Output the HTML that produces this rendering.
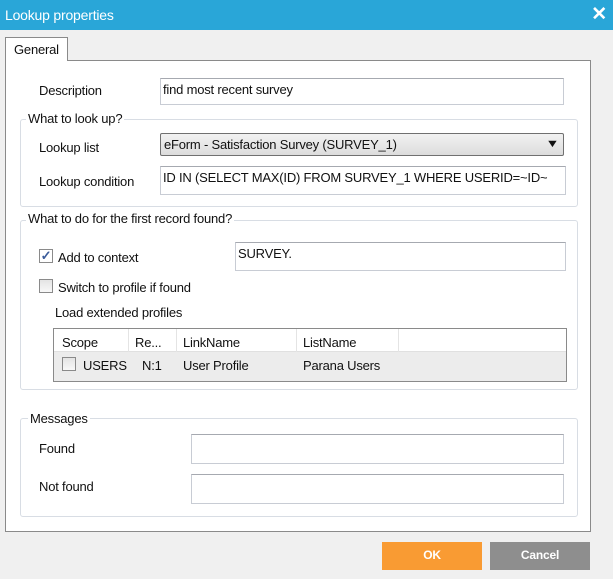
<!DOCTYPE html>
<html><head><style>
*{margin:0;padding:0;box-sizing:border-box}
body{width:613px;height:579px;background:#f0f0f0;font-family:"Liberation Sans",sans-serif;font-size:13px;color:#111;position:relative;overflow:hidden;letter-spacing:-0.2px}
.a{position:absolute}
.title{left:0;top:0;width:613px;height:30px;background:#29a6d8;color:#fff;font-size:14px;line-height:31px;padding-left:5px}
.x{right:6px;top:3px;color:#fff;font-size:19px;font-weight:bold}
.panel{left:5px;top:60px;width:586px;height:472px;background:#fff;border:1px solid #8a8a8a}
.tab{left:5px;top:37px;width:63px;height:24px;background:#fff;border:1px solid #8a8a8a;border-bottom:none;padding:4px 0 0 8px;z-index:2}
.inp{background:#fff;border:1px solid #c8ccd4;border-top-color:#a6a9b0;padding:3px 2px}
.grp{border:1px solid #d8dde4;border-radius:3px}
.gl{background:#fff;padding:0 2px}
.cb{width:14px;height:14px;border:1px solid #8a8a8a;background:linear-gradient(#e4e4e4,#f8f8f8)}
.btn{width:100px;height:28px;color:#fff;font-weight:bold;text-align:center;line-height:27px;font-size:12px}
</style></head><body>
<div class="a title">Lookup properties</div>
<div class="a x">✕</div>
<div class="a tab">General</div>
<div class="a panel"></div>

<div class="a" style="left:39px;top:83px">Description</div>
<div class="a inp" style="left:160px;top:78px;width:404px;height:27px">find most recent survey</div>

<div class="a grp" style="left:20px;top:119px;width:558px;height:88px"></div>
<div class="a gl" style="left:26px;top:111px">What to look up?</div>
<div class="a" style="left:39px;top:140px">Lookup list</div>
<div class="a" style="left:160px;top:133px;width:404px;height:23px;border:1px solid #707070;border-radius:2px;background:linear-gradient(#f2f2f2,#dcdcdc);padding:3px 3px">eForm - Satisfaction Survey (SURVEY_1)<span class="a" style="right:5px;top:4px;font-size:11px;transform:scaleX(1.3)">▼</span></div>
<div class="a" style="left:39px;top:174px">Lookup condition</div>
<div class="a inp" style="left:160px;top:166px;width:406px;height:29px;white-space:nowrap;overflow:hidden">ID IN (SELECT MAX(ID) FROM SURVEY_1 WHERE USERID=~ID~</div>

<div class="a grp" style="left:20px;top:220px;width:558px;height:170px"></div>
<div class="a gl" style="left:26px;top:211px">What to do for the first record found?</div>
<div class="a cb" style="left:39px;top:249px;background:#fff;color:#3a5b9a;font-size:13px;line-height:12px;text-align:center;font-weight:bold">✓</div>
<div class="a" style="left:58px;top:250px">Add to context</div>
<div class="a inp" style="left:235px;top:242px;width:331px;height:29px">SURVEY.</div>
<div class="a cb" style="left:39px;top:279px"></div>
<div class="a" style="left:58px;top:280px">Switch to profile if found</div>
<div class="a" style="left:55px;top:305px">Load extended profiles</div>
<div class="a" style="left:53px;top:328px;width:514px;height:54px;border:1px solid #8a8a8a;background:#ececec">
 <div class="a" style="left:0;top:0;width:512px;height:23px;background:#fff;border-bottom:1px solid #e0e0e0"></div>
 <div class="a" style="left:74px;top:0;width:1px;height:23px;background:#e4e4e4"></div>
 <div class="a" style="left:122px;top:0;width:1px;height:23px;background:#e4e4e4"></div>
 <div class="a" style="left:242px;top:0;width:1px;height:23px;background:#e4e4e4"></div>
 <div class="a" style="left:344px;top:0;width:1px;height:23px;background:#e4e4e4"></div>
 <div class="a" style="left:8px;top:6px">Scope</div>
 <div class="a" style="left:81px;top:6px">Re...</div>
 <div class="a" style="left:129px;top:6px">LinkName</div>
 <div class="a" style="left:249px;top:6px">ListName</div>
 <div class="a cb" style="left:8px;top:28px"></div>
 <div class="a" style="left:29px;top:29px">USERS</div>
 <div class="a" style="left:88px;top:29px">N:1</div>
 <div class="a" style="left:129px;top:29px">User Profile</div>
 <div class="a" style="left:249px;top:29px">Parana Users</div>
</div>

<div class="a grp" style="left:20px;top:418px;width:558px;height:99px"></div>
<div class="a gl" style="left:28px;top:411px">Messages</div>
<div class="a" style="left:39px;top:441px">Found</div>
<div class="a inp" style="left:191px;top:434px;width:373px;height:30px"></div>
<div class="a" style="left:39px;top:479px">Not found</div>
<div class="a inp" style="left:191px;top:474px;width:373px;height:30px"></div>

<div class="a btn" style="left:382px;top:542px;background:#f99b33">OK</div>
<div class="a btn" style="left:490px;top:542px;background:#8e8e8e">Cancel</div>
</body></html>
